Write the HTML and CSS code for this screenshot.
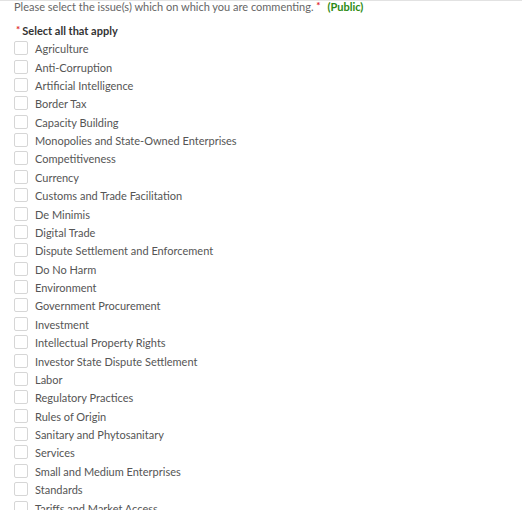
FILE: index.html
```html
<!DOCTYPE html>
<html>
<head>
<meta charset="utf-8">
<link rel="stylesheet" href="styles.css">
</head>
<body>
<div class="form">
  <div class="question">Please select the issue(s) which on which you are commenting. <span class="req">*</span> <span class="public">(Public)</span></div>
  <div class="sub"><span class="req">*</span>Select all that apply</div>
  <ul class="options">
    <li><span class="box"></span>Agriculture</li>
    <li><span class="box"></span>Anti-Corruption</li>
    <li><span class="box"></span>Artificial Intelligence</li>
    <li><span class="box"></span>Border Tax</li>
    <li><span class="box"></span>Capacity Building</li>
    <li><span class="box"></span>Monopolies and State-Owned Enterprises</li>
    <li><span class="box"></span>Competitiveness</li>
    <li><span class="box"></span>Currency</li>
    <li><span class="box"></span>Customs and Trade Facilitation</li>
    <li><span class="box"></span>De Minimis</li>
    <li><span class="box"></span>Digital Trade</li>
    <li><span class="box"></span>Dispute Settlement and Enforcement</li>
    <li><span class="box"></span>Do No Harm</li>
    <li><span class="box"></span>Environment</li>
    <li><span class="box"></span>Government Procurement</li>
    <li><span class="box"></span>Investment</li>
    <li><span class="box"></span>Intellectual Property Rights</li>
    <li><span class="box"></span>Investor State Dispute Settlement</li>
    <li><span class="box"></span>Labor</li>
    <li><span class="box"></span>Regulatory Practices</li>
    <li><span class="box"></span>Rules of Origin</li>
    <li><span class="box"></span>Sanitary and Phytosanitary</li>
    <li><span class="box"></span>Services</li>
    <li><span class="box"></span>Small and Medium Enterprises</li>
    <li><span class="box"></span>Standards</li>
    <li><span class="box"></span>Tariffs and Market Access</li>
  </ul>
</div>
</body>
</html>
```
FILE: styles.css
```css
html, body {
  margin: 0;
  padding: 0;
  background: #fff;
  height: 510px;
  overflow: hidden;
}
body {
  border-top: 1px solid #e2e2e2;
  font-family: Lato, "Noto Sans", sans-serif;
  font-size: 11px;
  color: #555;
}
.form {
  padding-left: 14px;
}
.question {
  color: #666;
  font-size: 11px;
  line-height: 14px;
  margin-top: -1px;
}
.req {
  color: #e0262b;
  font-size: 10px;
  font-weight: bold;
  vertical-align: top;
  line-height: 11px;
}
.public {
  margin-left: 4px;
  color: #2b8a12;
  font-weight: bold;
}
.sub {
  color: #333;
  font-weight: bold;
  font-size: 11px;
  line-height: 14px;
  margin-top: 10px;
  padding-left: 2px;
}
.sub .req {
  margin-right: 2px;
}
.options {
  list-style: none;
  margin: 1px 0 0 0;
  padding: 0;
}
.options li {
  display: flex;
  align-items: center;
  height: 18.375px;
  gap: 7px;
  color: #555;
  font-size: 11px;
  padding-top: 1px;
  box-sizing: border-box;
}
.box {
  width: 12px;
  height: 12px;
  border: 1px solid #d6d6d6;
  border-radius: 2px;
  background: #fff;
  flex: none;
  margin-top: -1px;
}
```
